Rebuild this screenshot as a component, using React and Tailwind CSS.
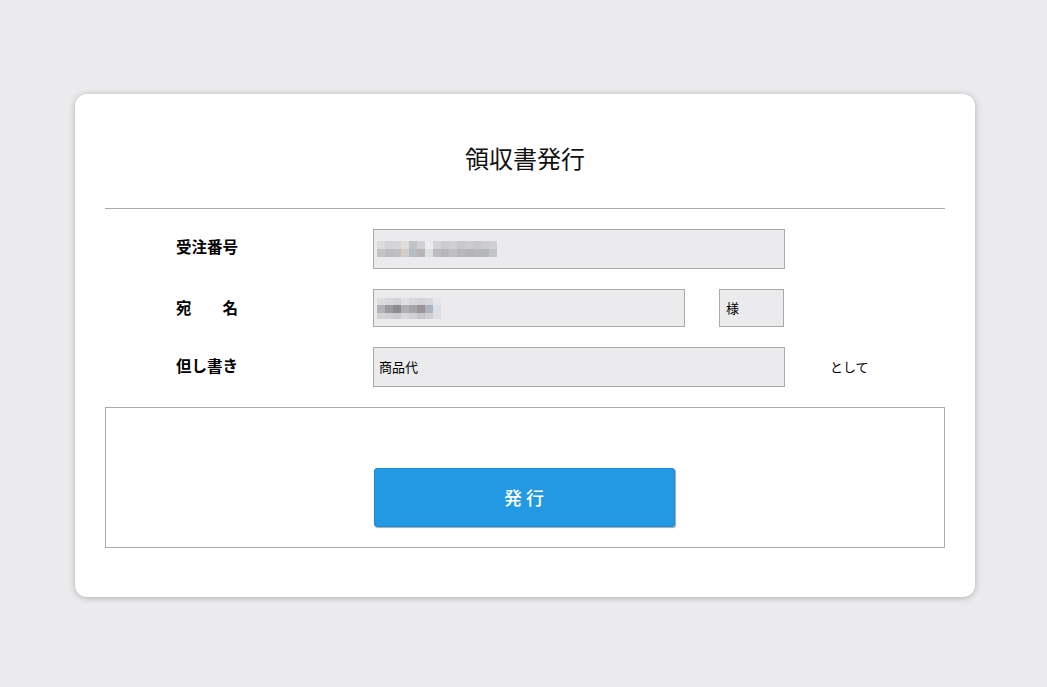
import React from "react";

const blur1 = [
  ["#dcdcde", "#d4d4d6", "#d6d6d8", "#e0dcd8", "#c0c4c8", "#d0d0d2", "#ececee", "#d4d4d6", "#cccccf", "#d0d0d2", "#c8c8cc", "#ccccce", "#c8c8cc", "#ccccce", "#d0d0d2"],
  ["#c4c4c6", "#bcbcbf", "#bfbfc2", "#d4ccc8", "#b4bcc4", "#b8b4b4", "#dce0e0", "#c0bcbe", "#b8b8bc", "#c0c0c4", "#b8b8bc", "#b4b4b4", "#b8b8bc", "#b4b8bc", "#c4c4c8"],
];
const blur2 = [
  ["#dcdcde", "#d8d8da", "#d4d4d6", "#e0e0e2", "#d8d8da", "#d4d4d6", "#d8d8dc", "#e4e6ea"],
  ["#b4b4b8", "#9c9ca0", "#8c8c8e", "#b0b0b4", "#a8a4a8", "#9c9494", "#b0b4c0", "#dce0e8"],
  ["#d4d4d6", "#d0d0d4", "#ccccce", "#d8d8da", "#d0d0d2", "#c8c8ca", "#d0d0d4", "#dcdee2"],
];

function Pixels({ rows, h }) {
  return (
    <div className="flex flex-col">
      {rows.map((r, i) => (
        <div key={i} className="flex">
          {r.map((c, j) => (
            <div key={j} className="w-[8px]" style={{ backgroundColor: c, height: h[i] }} />
          ))}
        </div>
      ))}
    </div>
  );
}

const font = { fontFamily: '"Noto Sans CJK JP", "Noto Sans", sans-serif' };

export default function App() {
  return (
    <div className="min-h-[687px] w-full bg-[#ebebed] pl-[75px] pt-[94px]" style={font}>
      <div className="w-[900px] h-[503px] rounded-[12px] bg-white px-[30px] shadow-[0_1px_6px_rgba(0,0,0,0.25)] flex flex-col">
        <div className="h-[114px] flex items-center justify-center pt-[14px] text-[24px] text-[#111] leading-none">
          領収書発行
        </div>
        <div className="h-px bg-[#aaaaaa]" />
        <div className="flex flex-col gap-[20px] pt-[20px]">
          <div className="flex items-center">
            <div className="w-[268px] pl-[71px] text-[15.5px] font-bold text-black leading-none -mt-[5px]">受注番号</div>
            <div className="w-[412px] h-[40px] border border-[#aaaaaa] bg-[#ebebed] flex items-center pl-[3px]">
              <Pixels rows={blur1} h={[8, 8]} />
            </div>
          </div>
          <div className="flex items-center">
            <div className="w-[268px] pl-[71px] text-[15.5px] font-bold text-black leading-none whitespace-pre">宛　　名</div>
            <div className="w-[312px] h-[38px] border border-[#aaaaaa] bg-[#ebebed] flex items-center pl-[3px]">
              <Pixels rows={blur2} h={[7, 8, 6]} />
            </div>
            <div className="ml-[34px] w-[65px] h-[38px] border border-[#aaaaaa] bg-[#ebebed] flex items-center pl-[6px] text-[13px] text-black">
              様
            </div>
          </div>
          <div className="flex items-center">
            <div className="w-[268px] pl-[71px] text-[15.5px] font-bold text-black leading-none -mt-[3px]">但し書き</div>
            <div className="w-[412px] h-[40px] border border-[#aaaaaa] bg-[#ebebed] flex items-center pl-[5px] text-[13px] text-black">
              商品代
            </div>
            <div className="ml-[45px] text-[13px] text-black">として</div>
          </div>
          <div className="h-[141px] border border-[#aaaaaa] flex flex-col items-center pt-[60px]">
            <button className="ml-[-2px] w-[301px] h-[59px] rounded-[3px] bg-[#2398e3] border border-[#1d8bd6] shadow-[1px_1px_1px_rgba(0,0,0,0.35)] text-white text-[18px] font-medium tracking-[4px] pl-[4px] flex items-center justify-center">
              発行
            </button>
          </div>
        </div>
      </div>
    </div>
  );
}
